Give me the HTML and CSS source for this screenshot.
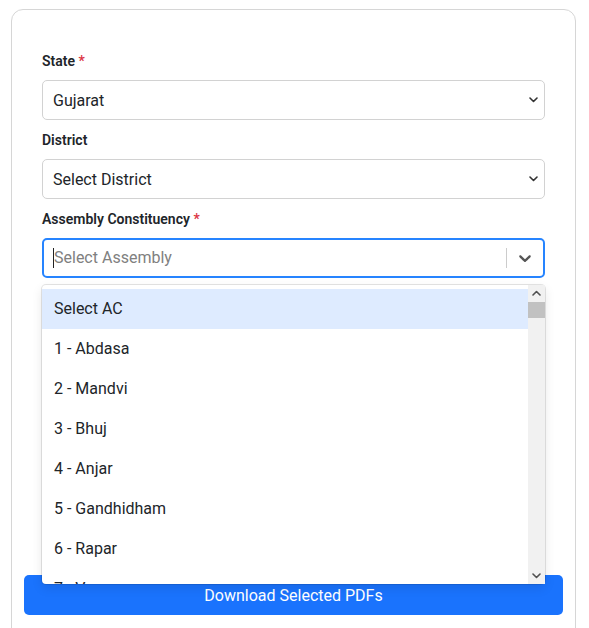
FILE: index.html
```html
<!DOCTYPE html>
<html lang="en">
<head>
<meta charset="utf-8">
<title>Download PDFs</title>
<link rel="stylesheet" href="styles.css">
</head>
<body>
<div class="card">
  <div class="form">
    <div class="field">
      <label class="label" for="state">State <span class="req">*</span></label>
      <div class="select-wrap">
        <select id="state" class="native-select">
          <option>Gujarat</option>
        </select>
        <svg class="select-arrow" width="9" height="6" viewBox="0 0 9 6" aria-hidden="true"><path d="M1 1l3.5 3.5L8 1"/></svg>
      </div>
    </div>
    <div class="field">
      <label class="label" for="district">District</label>
      <div class="select-wrap">
        <select id="district" class="native-select">
          <option>Select District</option>
        </select>
        <svg class="select-arrow" width="9" height="6" viewBox="0 0 9 6" aria-hidden="true"><path d="M1 1l3.5 3.5L8 1"/></svg>
      </div>
    </div>
    <div class="field field-ac">
      <label class="label">Assembly Constituency <span class="req">*</span></label>
      <div class="rs">
        <div class="rs-control">
          <div class="rs-value"><span class="rs-caret"></span><span class="rs-placeholder">Select Assembly</span></div>
          <div class="rs-indicators">
            <span class="rs-sep"></span>
            <span class="rs-dd">
              <svg width="20" height="20" viewBox="0 0 20 20" aria-hidden="true"><path d="M4.516 7.548c0.436-0.446 1.043-0.481 1.576 0l3.908 3.747 3.908-3.747c0.533-0.481 1.141-0.446 1.574 0 0.436 0.445 0.408 1.197 0 1.615-0.406 0.418-4.695 4.502-4.695 4.502-0.217 0.223-0.502 0.335-0.787 0.335s-0.57-0.112-0.789-0.335c0 0-4.287-4.084-4.695-4.502s-0.436-1.17 0-1.615z"/></svg>
            </span>
          </div>
        </div>
        <div class="rs-menu">
          <div class="rs-list">
            <div class="rs-opt focused">Select AC</div>
            <div class="rs-opt">1 - Abdasa</div>
            <div class="rs-opt">2 - Mandvi</div>
            <div class="rs-opt">3 - Bhuj</div>
            <div class="rs-opt">4 - Anjar</div>
            <div class="rs-opt">5 - Gandhidham</div>
            <div class="rs-opt">6 - Rapar</div>
            <div class="rs-opt">7 - Vav</div>
            <div class="rs-opt">8 - Tharad</div>
            <div class="rs-opt">9 - Dhanera</div>
            <div class="rs-opt">10 - Danta</div>
            <div class="rs-opt">11 - Vadgam</div>
            <div class="rs-opt">12 - Palanpur</div>
            <div class="rs-opt">13 - Deesa</div>
            <div class="rs-opt">14 - Deodar</div>
            <div class="rs-opt">15 - Kankrej</div>
            <div class="rs-opt">16 - Radhanpur</div>
            <div class="rs-opt">17 - Chanasma</div>
            <div class="rs-opt">18 - Patan</div>
            <div class="rs-opt">19 - Sidhpur</div>
            <div class="rs-opt">20 - Kheralu</div>
            <div class="rs-opt">21 - Unjha</div>
            <div class="rs-opt">22 - Visnagar</div>
            <div class="rs-opt">23 - Bechraji</div>
            <div class="rs-opt">24 - Kadi</div>
            <div class="rs-opt">25 - Mahesana</div>
            <div class="rs-opt">26 - Vijapur</div>
            <div class="rs-opt">27 - Himatnagar</div>
            <div class="rs-opt">28 - Idar</div>
            <div class="rs-opt">29 - Khedbrahma</div>
            <div class="rs-opt">30 - Bhiloda</div>
            <div class="rs-opt">31 - Modasa</div>
            <div class="rs-opt">32 - Bayad</div>
            <div class="rs-opt">33 - Prantij</div>
            <div class="rs-opt">34 - Dehgam</div>
            <div class="rs-opt">35 - Gandhinagar South</div>
            <div class="rs-opt">36 - Gandhinagar North</div>
            <div class="rs-opt">37 - Mansa</div>
            <div class="rs-opt">38 - Kalol</div>
            <div class="rs-opt">39 - Viramgam</div>
            <div class="rs-opt">40 - Sanand</div>
            <div class="rs-opt">41 - Ghatlodia</div>
            <div class="rs-opt">42 - Vejalpur</div>
            <div class="rs-opt">43 - Vatva</div>
            <div class="rs-opt">44 - Ellisbridge</div>
            <div class="rs-opt">45 - Naranpura</div>
            <div class="rs-opt">46 - Nikol</div>
            <div class="rs-opt">47 - Naroda</div>
            <div class="rs-opt">48 - Thakkarbapa Nagar</div>
            <div class="rs-opt">49 - Bapunagar</div>
            <div class="rs-opt">50 - Amraiwadi</div>
            <div class="rs-opt">51 - Dariyapur</div>
            <div class="rs-opt">52 - Jamalpur-Khadia</div>
            <div class="rs-opt">53 - Maninagar</div>
            <div class="rs-opt">54 - Danilimda</div>
            <div class="rs-opt">55 - Sabarmati</div>
            <div class="rs-opt">56 - Asarwa</div>
            <div class="rs-opt">57 - Daskroi</div>
            <div class="rs-opt">58 - Dholka</div>
            <div class="rs-opt">59 - Dhandhuka</div>
            <div class="rs-opt">60 - Dasada</div>
            <div class="rs-opt">61 - Limbdi</div>
            <div class="rs-opt">62 - Wadhwan</div>
            <div class="rs-opt">63 - Chotila</div>
            <div class="rs-opt">64 - Dhrangadhra</div>
            <div class="rs-opt">65 - Morbi</div>
            <div class="rs-opt">66 - Tankara</div>
            <div class="rs-opt">67 - Wankaner</div>
            <div class="rs-opt">68 - Rajkot East</div>
            <div class="rs-opt">69 - Rajkot West</div>
            <div class="rs-opt">70 - Rajkot South</div>
            <div class="rs-opt">71 - Rajkot Rural</div>
            <div class="rs-opt">72 - Jasdan</div>
            <div class="rs-opt">73 - Gondal</div>
            <div class="rs-opt">74 - Jetpur</div>
            <div class="rs-opt">75 - Dhoraji</div>
            <div class="rs-opt">76 - Kalavad</div>
            <div class="rs-opt">77 - Jamnagar Rural</div>
            <div class="rs-opt">78 - Jamnagar North</div>
            <div class="rs-opt">79 - Jamnagar South</div>
            <div class="rs-opt">80 - Jamjodhpur</div>
            <div class="rs-opt">81 - Khambhalia</div>
            <div class="rs-opt">82 - Dwarka</div>
            <div class="rs-opt">83 - Porbandar</div>
            <div class="rs-opt">84 - Kutiyana</div>
            <div class="rs-opt">85 - Manavadar</div>
            <div class="rs-opt">86 - Junagadh</div>
            <div class="rs-opt">87 - Visavadar</div>
            <div class="rs-opt">88 - Keshod</div>
            <div class="rs-opt">89 - Mangrol</div>
            <div class="rs-opt">90 - Somnath</div>
            <div class="rs-opt">91 - Talala</div>
            <div class="rs-opt">92 - Kodinar</div>
            <div class="rs-opt">93 - Una</div>
            <div class="rs-opt">94 - Dhari</div>
            <div class="rs-opt">95 - Amreli</div>
            <div class="rs-opt">96 - Lathi</div>
            <div class="rs-opt">97 - Savarkundla</div>
            <div class="rs-opt">98 - Rajula</div>
            <div class="rs-opt">99 - Mahuva</div>
            <div class="rs-opt">100 - Talaja</div>
            <div class="rs-opt">101 - Gariadhar</div>
            <div class="rs-opt">102 - Palitana</div>
            <div class="rs-opt">103 - Bhavnagar Rural</div>
            <div class="rs-opt">104 - Bhavnagar East</div>
            <div class="rs-opt">105 - Bhavnagar West</div>
            <div class="rs-opt">106 - Gadhada</div>
            <div class="rs-opt">107 - Botad</div>
            <div class="rs-opt">108 - Khambhat</div>
            <div class="rs-opt">109 - Borsad</div>
            <div class="rs-opt">110 - Anklav</div>
            <div class="rs-opt">111 - Umreth</div>
            <div class="rs-opt">112 - Anand</div>
            <div class="rs-opt">113 - Petlad</div>
            <div class="rs-opt">114 - Sojitra</div>
            <div class="rs-opt">115 - Matar</div>
            <div class="rs-opt">116 - Nadiad</div>
            <div class="rs-opt">117 - Mahemdabad</div>
            <div class="rs-opt">118 - Mahudha</div>
            <div class="rs-opt">119 - Thasra</div>
            <div class="rs-opt">120 - Kapadvanj</div>
            <div class="rs-opt">121 - Balasinor</div>
            <div class="rs-opt">122 - Lunawada</div>
            <div class="rs-opt">123 - Santrampur</div>
            <div class="rs-opt">124 - Shehra</div>
            <div class="rs-opt">125 - Morva Hadaf</div>
            <div class="rs-opt">126 - Godhra</div>
            <div class="rs-opt">127 - Kalol</div>
            <div class="rs-opt">128 - Halol</div>
            <div class="rs-opt">129 - Fatepura</div>
            <div class="rs-opt">130 - Jhalod</div>
            <div class="rs-opt">131 - Limkheda</div>
            <div class="rs-opt">132 - Dahod</div>
            <div class="rs-opt">133 - Garbada</div>
            <div class="rs-opt">134 - Devgadh Baria</div>
            <div class="rs-opt">135 - Savli</div>
            <div class="rs-opt">136 - Vaghodia</div>
            <div class="rs-opt">137 - Chhota Udaipur</div>
            <div class="rs-opt">138 - Jetpur</div>
            <div class="rs-opt">139 - Sankheda</div>
            <div class="rs-opt">140 - Dabhoi</div>
            <div class="rs-opt">141 - Vadodara City</div>
            <div class="rs-opt">142 - Sayajigunj</div>
            <div class="rs-opt">143 - Akota</div>
            <div class="rs-opt">144 - Raopura</div>
            <div class="rs-opt">145 - Manjalpur</div>
            <div class="rs-opt">146 - Padra</div>
            <div class="rs-opt">147 - Karjan</div>
            <div class="rs-opt">148 - Nandod</div>
            <div class="rs-opt">149 - Dediapada</div>
            <div class="rs-opt">150 - Jambusar</div>
            <div class="rs-opt">151 - Vagra</div>
            <div class="rs-opt">152 - Jhagadia</div>
            <div class="rs-opt">153 - Bharuch</div>
            <div class="rs-opt">154 - Ankleshwar</div>
            <div class="rs-opt">155 - Olpad</div>
            <div class="rs-opt">156 - Mangrol</div>
            <div class="rs-opt">157 - Mandvi</div>
            <div class="rs-opt">158 - Kamrej</div>
            <div class="rs-opt">159 - Surat East</div>
            <div class="rs-opt">160 - Surat North</div>
            <div class="rs-opt">161 - Varachha Road</div>
            <div class="rs-opt">162 - Karanj</div>
            <div class="rs-opt">163 - Limbayat</div>
            <div class="rs-opt">164 - Udhana</div>
            <div class="rs-opt">165 - Majura</div>
            <div class="rs-opt">166 - Katargam</div>
            <div class="rs-opt">167 - Surat West</div>
            <div class="rs-opt">168 - Choryasi</div>
            <div class="rs-opt">169 - Bardoli</div>
            <div class="rs-opt">170 - Mahuva</div>
            <div class="rs-opt">171 - Vyara</div>
            <div class="rs-opt">172 - Nizar</div>
            <div class="rs-opt">173 - Dang</div>
            <div class="rs-opt">174 - Jalalpore</div>
            <div class="rs-opt">175 - Navsari</div>
            <div class="rs-opt">176 - Gandevi</div>
            <div class="rs-opt">177 - Vansda</div>
            <div class="rs-opt">178 - Dharampur</div>
            <div class="rs-opt">179 - Valsad</div>
            <div class="rs-opt">180 - Pardi</div>
            <div class="rs-opt">181 - Kaprada</div>
            <div class="rs-opt">182 - Umbergaon</div>
          </div>
          <div class="sb" aria-hidden="true">
            <span class="sb-btn"><svg width="9" height="6" viewBox="0 0 9 6"><path d="M1 5l3.5-3.5L8 5"/></svg></span>
            <span class="sb-track"><span class="sb-thumb"></span></span>
            <span class="sb-btn"><svg width="9" height="6" viewBox="0 0 9 6"><path d="M1 1l3.5 3.5L8 1"/></svg></span>
          </div>
        </div>
      </div>
    </div>
  </div>
  <div class="results"></div>
  <button class="btn" type="button">Download Selected PDFs</button>
</div>
</body>
</html>
```

FILE: styles.css
```css
* { box-sizing: border-box; }

body {
  margin: 0;
  background: #fff;
  font-family: Roboto, "Noto Sans", "Liberation Sans", sans-serif;
  color: #212529;
  overflow: hidden;
}

.card {
  margin: 9px 0 0 11px;
  width: 565px;
  min-height: 700px;
  border: 1px solid #d6d6d6;
  border-radius: 12px;
  padding: 0 12px;
}

.form {
  padding: 41px 18px 0;
}

.field {
  margin-bottom: 10px;
}

.label {
  display: block;
  font-size: 14px;
  font-weight: 600;
  line-height: 21px;
  margin-bottom: 8px;
  color: #212529;
}

.req {
  color: #dc3545;
}

.select-wrap {
  position: relative;
}

.native-select {
  display: block;
  width: 100%;
  height: 40px;
  padding: 0 24px 0 10px;
  font-family: inherit;
  font-size: 16px;
  color: #212529;
  background: #fff;
  border: 1px solid #d2d2d2;
  border-radius: 5px;
  appearance: none;
  -webkit-appearance: none;
}

.select-arrow {
  position: absolute;
  right: 7px;
  top: 17px;
  fill: none;
  stroke: #333;
  stroke-width: 1.6;
  stroke-linecap: round;
  stroke-linejoin: round;
  pointer-events: none;
}

.rs {
  position: relative;
}

.rs-control {
  display: flex;
  align-items: center;
  height: 40px;
  border: 2px solid #2684ff;
  border-radius: 5px;
  background: #fff;
}

.rs-value {
  flex: 1;
  display: flex;
  align-items: center;
  padding: 0 8px 0 9px;
  font-size: 16px;
  line-height: 24px;
}

.rs-caret {
  width: 1px;
  height: 20px;
  background: #222;
}

.rs-placeholder {
  color: #808080;
}

.rs-indicators {
  display: flex;
  align-items: center;
  align-self: stretch;
}

.rs-sep {
  width: 1px;
  align-self: stretch;
  margin: 8px 0;
  background: #cccccc;
}

.rs-dd {
  display: flex;
  padding: 8px;
  color: #555;
}

.rs-dd svg {
  fill: currentColor;
  display: block;
}

.rs-menu {
  position: absolute;
  top: 100%;
  left: 0;
  right: 0;
  margin-top: 7px;
  background: #fff;
  border-radius: 4px;
  box-shadow: 0 0 0 1px rgba(0, 0, 0, 0.1), 0 4px 11px rgba(0, 0, 0, 0.1);
  z-index: 2;
}

.rs-list {
  max-height: 299px;
  overflow: hidden;
  padding: 4px 17px 4px 0;
}

.sb {
  position: absolute;
  top: 0;
  right: 0;
  bottom: 0;
  width: 17px;
  display: flex;
  flex-direction: column;
  background: #f1f1f1;
}

.sb-btn {
  height: 16px;
  flex: none;
  display: flex;
  align-items: center;
  justify-content: center;
}

.sb-btn svg {
  fill: none;
  stroke: #505050;
  stroke-width: 1.6;
  stroke-linecap: round;
  stroke-linejoin: round;
}

.sb-track {
  flex: 1;
  padding: 1px 0 0;
}

.sb-thumb {
  display: block;
  height: 16px;
  background: #c1c1c1;
}

.rs-opt {
  padding: 8px 12px;
  font-size: 16px;
  line-height: 24px;
  color: #212529;
}

.rs-opt.focused {
  background: #deebff;
}

.results {
  height: 287px;
}

.btn {
  display: block;
  width: 100%;
  height: 40px;
  border: 0;
  border-radius: 5px;
  background: #1a73fd;
  color: #fff;
  font-family: inherit;
  font-size: 16px;
}
```
